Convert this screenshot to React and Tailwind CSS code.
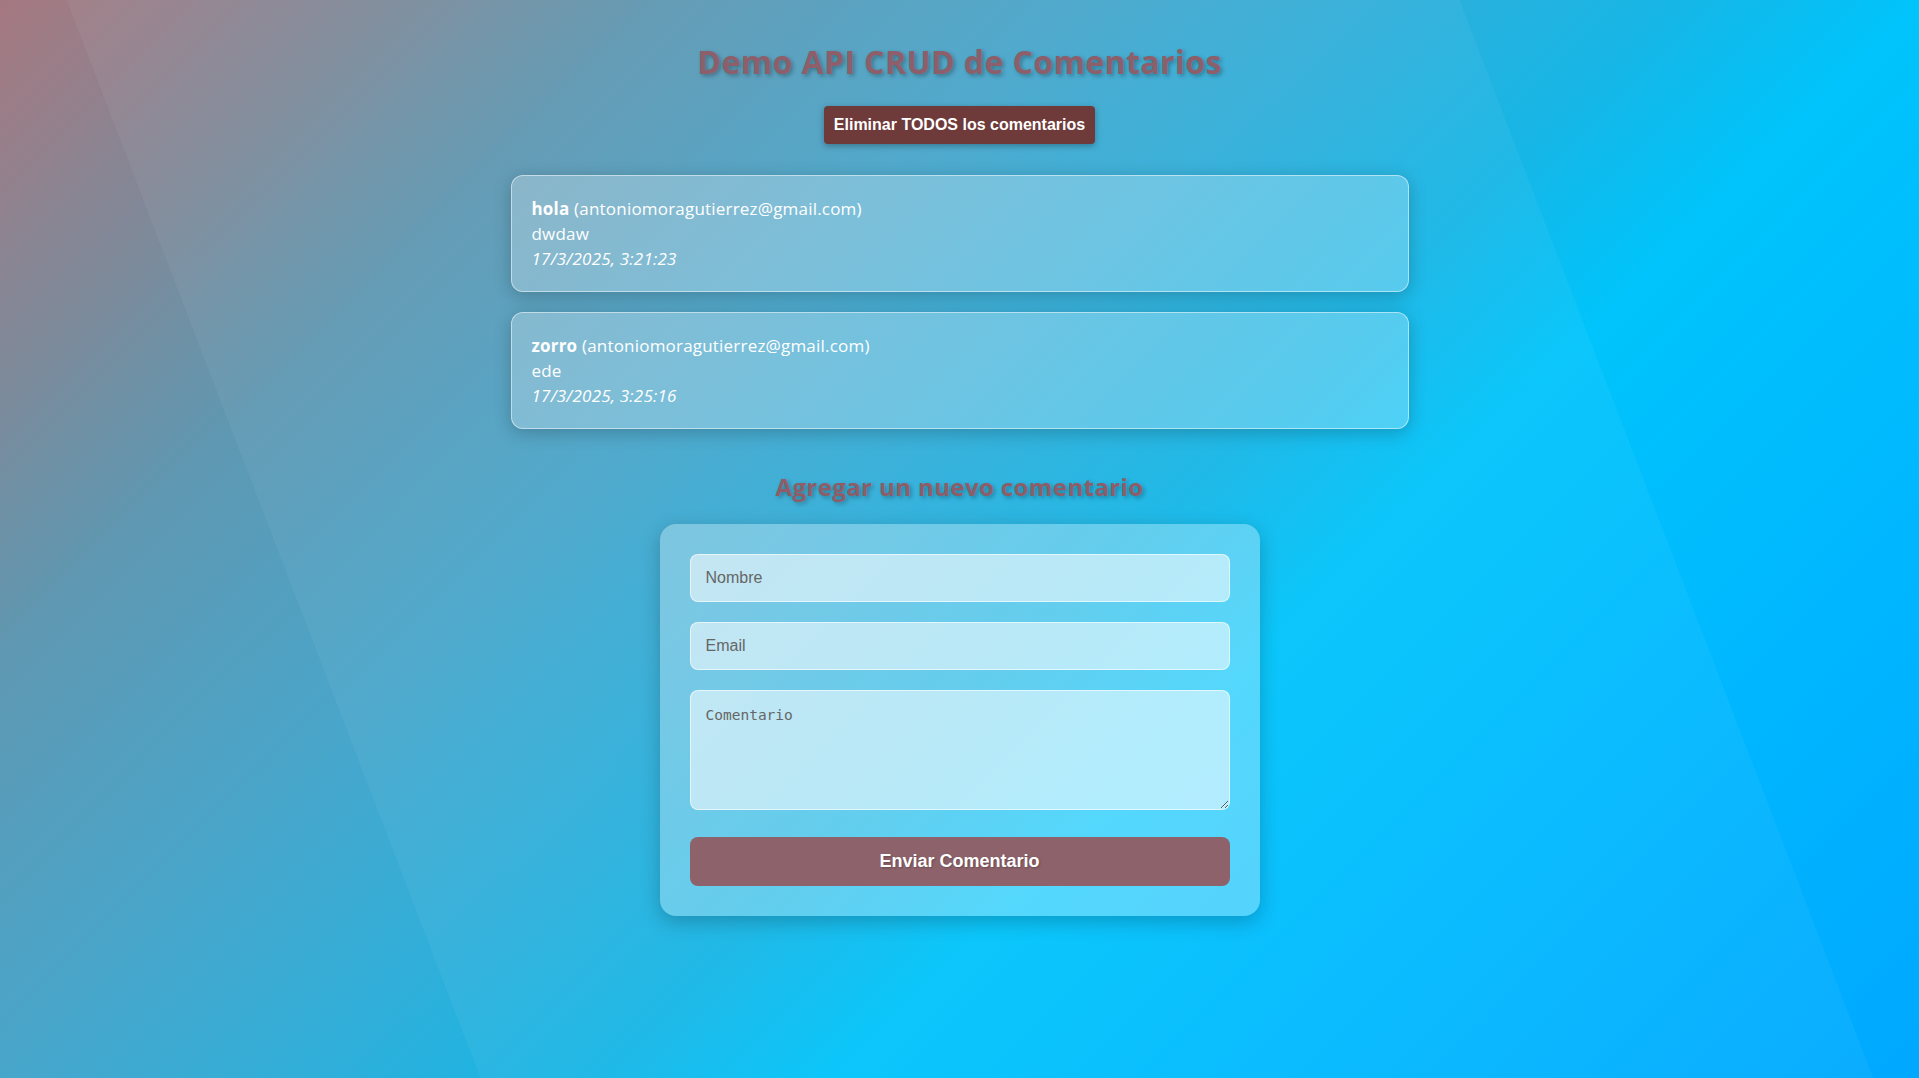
import { useState } from 'react';

const comments = [
  { id: 1, nombre: 'hola', email: 'antoniomoragutierrez@gmail.com', comentario: 'dwdaw', fecha: '17/3/2025, 3:21:23' },
  { id: 2, nombre: 'zorro', email: 'antoniomoragutierrez@gmail.com', comentario: 'ede', fecha: '17/3/2025, 3:25:16' },
];

const App = () => {
  const [form, setForm] = useState({ nombre: '', email: '', comentario: '' });

  return (
    <div className="min-h-[1078px] w-full bg-[linear-gradient(69deg,rgba(255,255,255,0)_20.6%,rgba(255,255,255,0.045)_20.6%,rgba(255,255,255,0.045)_80.3%,rgba(255,255,255,0)_80.3%),linear-gradient(135deg,#a67880_0%,#7d8a9a_13%,#5f98b2_22%,#48a6cb_36%,#33aed8_45%,#16b6e6_56%,#00c4fb_64%,#00b8ff_80%,#00a8ff_100%)] font-['Open_Sans',sans-serif]">
      <div className="flex flex-col items-center">
        <h1 className="mt-[42px] text-[32px] leading-[40px] tracking-[0.4px] font-bold text-[#8c5f6a] [text-shadow:2px_2px_4px_rgba(0,0,0,0.3)]">
          Demo API CRUD de Comentarios
        </h1>

        <button className="mt-[24px] h-[38px] px-[10px] rounded-[4px] bg-[#6e3a3a] text-white text-[16px] font-bold font-['Liberation_Sans',Arial,sans-serif] shadow-[0_2px_6px_rgba(0,0,0,0.3)]">
          Eliminar TODOS los comentarios
        </button>

        <div className="mt-[31px] w-[898px] flex flex-col gap-[20px]">
          {comments.map(c => (
            <div
              key={c.id}
              className="p-5 rounded-[12px] border border-white/50 bg-white/25 text-white text-[17px] leading-[25px] tracking-[0.2px] shadow-[0_4px_18px_rgba(0,0,0,0.22)]"
            >
              <p><span className="font-bold">{c.nombre}</span> ({c.email})</p>
              <p>{c.comentario}</p>
              <p className="italic">{c.fecha}</p>
            </div>
          ))}
        </div>

        <h2 className="mt-[42px] text-[24px] leading-[32px] tracking-[0.4px] font-bold text-[#8e5d68] [text-shadow:2px_2px_4px_rgba(0,0,0,0.3)]">
          Agregar un nuevo comentario
        </h2>

        <form
          onSubmit={e => e.preventDefault()}
          className="mt-[21px] mb-[120px] w-[600px] p-[30px] rounded-[16px] bg-white/30 shadow-[0_6px_20px_rgba(0,0,0,0.22)] flex flex-col"
        >
          <input
            type="text"
            placeholder="Nombre"
            value={form.nombre}
            onChange={e => setForm({ ...form, nombre: e.target.value })}
            className="h-[48px] px-[15px] rounded-[8px] border border-white/60 bg-white/55 text-[16px] font-['Liberation_Sans',Arial,sans-serif] text-gray-800 placeholder:text-[#666] outline-none"
          />
          <input
            type="email"
            placeholder="Email"
            value={form.email}
            onChange={e => setForm({ ...form, email: e.target.value })}
            className="mt-[20px] h-[48px] px-[15px] rounded-[8px] border border-white/60 bg-white/55 text-[16px] font-['Liberation_Sans',Arial,sans-serif] text-gray-800 placeholder:text-[#666] outline-none"
          />
          <textarea
            placeholder="Comentario"
            value={form.comentario}
            onChange={e => setForm({ ...form, comentario: e.target.value })}
            className="mt-[20px] h-[120px] p-[15px] rounded-[8px] border border-white/60 bg-white/55 text-[14.5px] leading-[18px] font-['DejaVu_Sans_Mono',monospace] text-gray-800 placeholder:text-[#666] outline-none"
          />
          <button
            type="submit"
            className="mt-[27px] h-[49px] rounded-[8px] bg-[#8d626a] text-white text-[18px] font-bold font-['Liberation_Sans',Arial,sans-serif] [text-shadow:1px_1px_2px_rgba(0,0,0,0.25)]"
          >
            Enviar Comentario
          </button>
        </form>
      </div>
    </div>
  );
};

export default App;
